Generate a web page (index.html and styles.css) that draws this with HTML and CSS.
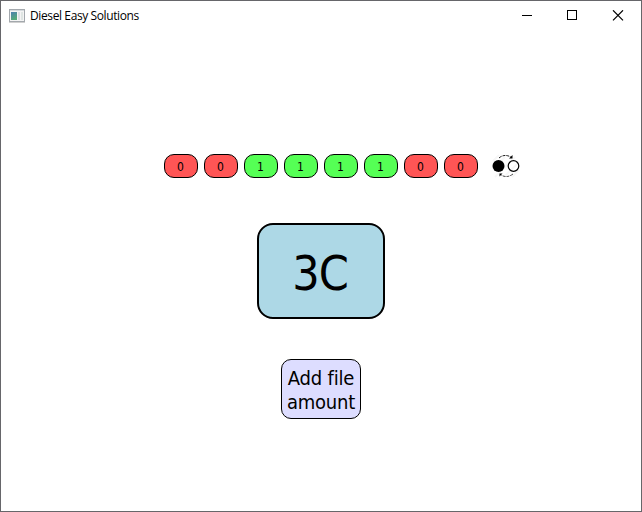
FILE: index.html
```html
<!DOCTYPE html>
<html lang="en">
<head>
<meta charset="utf-8">
<title>Diesel Easy Solutions</title>
<link rel="stylesheet" href="styles.css">
</head>
<body>
<div class="window">
  <header class="titlebar">
    <svg class="app-icon" width="16" height="14" viewBox="0 0 16 14">
      <defs><linearGradient id="pane" x2="0.4" y2="1"><stop offset="0" stop-color="#4c80b0"/><stop offset="1" stop-color="#55aa78"/></linearGradient></defs>
      <rect x=".5" y=".5" width="15" height="12" fill="#f4f4f4" stroke="#a3a8ad"/>
      <path d="M1 1.5h14" stroke="#d5dadd"/>
      <rect x="2" y="3" width="6" height="8" fill="url(#pane)"/>
      <rect x="9" y="3" width="2" height="8" fill="#dcdfe3"/>
      <rect x="12" y="3" width="2" height="8" fill="#dfe5e3"/>
      <path d="M0 13.5h16" stroke="#d0d0d0"/>
    </svg>
    <span class="title">Diesel Easy Solutions</span>
    <svg class="controls" width="104" height="12" viewBox="0 0 104 12" fill="none" stroke="#000">
      <path d="M1 5.500h10"/>
      <rect x="46.500" y=".5" width="9" height="9"/>
      <path d="M92 .3l10 10M102 .3l-10 10" stroke-width="1.200"/>
    </svg>
  </header>
  <main class="content">
    <div class="bits">
      <button class="bit off">0</button>
      <button class="bit off">0</button>
      <button class="bit on">1</button>
      <button class="bit on">1</button>
      <button class="bit on">1</button>
      <button class="bit on">1</button>
      <button class="bit off">0</button>
      <button class="bit off">0</button>
      <svg class="invert" width="28" height="24" viewBox="0 0 28 24" fill="none" stroke="#000">
        <path d="M1 7l6-6M1 15L13 3M3 23L23 3M12 23L27 8M20 23l7-7" stroke="#f7f7f7" stroke-width="2"/>
        <circle cx="6.500" cy="12" r="6" fill="#000" stroke="none"/>
        <circle cx="21.500" cy="12" r="5.300" stroke-width="1.200"/>
        <path d="M7 4Q12-.5 19 3" stroke-width=".9" stroke-dasharray="3 1"/>
        <path d="M20.500 1v3.500H17z" fill="#000" stroke="none"/>
        <path d="M21 20Q15 24.500 9 21" stroke-width=".7" stroke-dasharray="3 1"/>
        <path d="M7.500 22.500V19.500H10.500z" fill="#000" stroke="none"/>
      </svg>
    </div>
    <div class="value">3C</div>
    <button class="add">Add file<br>amount</button>
  </main>
</div>
</body>
</html>
```
FILE: styles.css
```css
* { box-sizing: border-box; }
body {
  margin: 0;
  color: #000;
  font-family: "DejaVu Sans Condensed", "DejaVu Sans", sans-serif;
  font-stretch: condensed;
}
button { margin: 0; padding: 0; color: inherit; font-family: inherit; font-stretch: inherit; }
.window {
  display: flex;
  flex-direction: column;
  width: 642px;
  height: 512px;
  border: 1px solid #66666a;
  background: #fff;
}
.titlebar {
  display: flex;
  align-items: center;
  height: 30px;
  padding: 0 16px 0 8px;
}
.title {
  margin-left: 5px;
  font-family: "Open Sans", sans-serif;
  font-stretch: normal;
  font-size: 12px;
  line-height: 16px;
  letter-spacing: -0.39px;
}
.controls { margin-left: auto; }
.content {
  display: flex;
  flex-direction: column;
  align-items: center;
  padding-top: 123px;
}
.bits {
  display: flex;
  align-items: center;
  gap: 6px;
  height: 24px;
  margin-left: 41px;
}
.bit {
  width: 34px;
  height: 24px;
  padding-top: 2px;
  border: 1px solid #000;
  border-radius: 10px;
  font-size: 12px;
  line-height: 20px;
}
.off { background: #f55; }
.on { background: #5f5; }
.invert { margin-left: 8px; }
.value {
  width: 128px;
  height: 96px;
  margin-top: 45px;
  padding-right: 2px;
  border: 2px solid #000;
  border-radius: 16px;
  background: #add8e6;
  font-size: 48px;
  line-height: 96px;
  letter-spacing: -1px;
  text-align: center;
}
.add {
  width: 80px;
  height: 60px;
  margin-top: 40px;
  padding-top: 1px;
  border: 1px solid #000;
  border-radius: 10px;
  background: #ddf;
  font-size: 20px;
  line-height: 24px;
  letter-spacing: -0.2px;
}
```
